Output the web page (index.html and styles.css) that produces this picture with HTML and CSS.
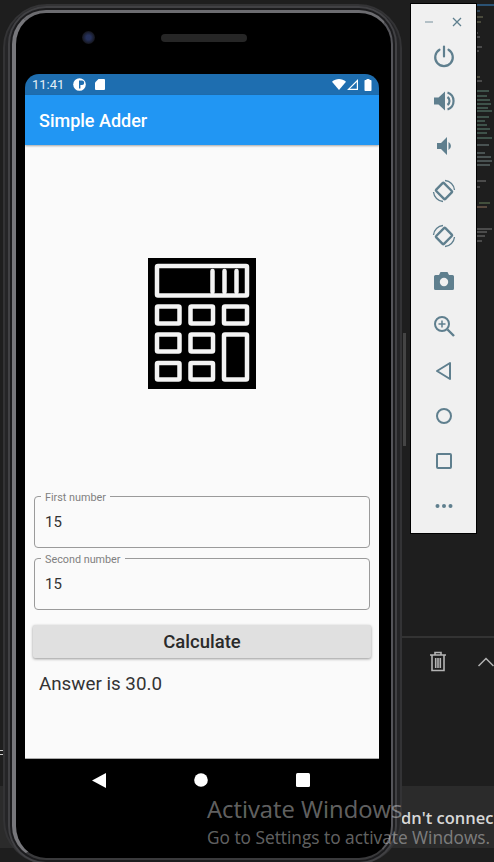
FILE: index.html
```html
<!DOCTYPE html>
<html lang="en">
<head>
<meta charset="UTF-8">
<meta name="viewport" content="width=device-width, initial-scale=1.0">
<title>Simple Adder</title>
<link rel="stylesheet" href="styles.css">
</head>
<body>
<div class="desktop">
  <div class="ide-band"></div>
  <div class="run-panel">
    <svg class="trash" width="18" height="21" viewBox="0 0 18 21" fill="none" stroke="#b4b4b4" stroke-width="1.6">
      <path d="M1 4h16M6 4V1.500h6V4M3 4v15.500h12V4M6.700 7v10M9 7v10M11.300 7v10"/>
    </svg>
    <svg class="chevron" width="16" height="10" viewBox="0 0 16 10" fill="none" stroke="#b4b4b4" stroke-width="1.5">
      <path d="M0.500 9L8 1.500 15.500 9"/>
    </svg>
  </div>
  <div class="error-text">dn't connec</div>
  <div class="side-scroll"></div>
  <div class="left-mark"></div>

  <svg class="minimap" width="17" height="245" viewBox="0 0 17 245" fill="none" stroke-width="1" opacity="0.8">
    <path stroke="#2f5f8a" stroke-width="2" d="M0 3h17"/>
    <path stroke="#4a7fa8" d="M0 9h3"/>
    <path stroke="#8d8d6a" d="M0 15h6M0 20h4"/>
    <path stroke="#909090" d="M0 31h1M0 35h3M0 45h5M0 49h2"/>
    <path stroke="#8d8d6a" d="M0 75h3"/>
    <path stroke="#909090" d="M0 79h5"/>
    <path stroke="#6fa08c" d="M0 89h12M0 94h10M0 98h13M0 102h14M0 106h11M0 109h15"/>
    <path stroke="#6fa08c" d="M0 115h12M0 119h8M0 123h10M0 127h13M0 131h10M0 136h15"/>
    <path stroke="#8aa0a0" d="M0 143h12M0 151h8M0 155h14M0 159h15M0 163h13"/>
    <path stroke="#909090" d="M0 179h9M0 185h3"/>
    <path stroke="#7d9a6a" d="M2 201h11"/>
    <path stroke="#b08a70" d="M0 205h10"/>
    <path stroke="#909090" d="M0 227h15M0 230h10M0 234h8M0 239h5"/>
  </svg>

  <div class="phone">
    <div class="phone-frame">
      <div class="phone-top">
        <div class="camera"></div>
        <div class="speaker"></div>
      </div>
      <div class="screen">
        <div class="status-bar">
          <span class="clock">11:41</span>
          <svg class="status-icon" width="13" height="13" viewBox="0 0 13 13">
            <circle cx="6.500" cy="6.500" r="6.300" fill="#fff"/>
            <path d="M6 2.500h3a2.200 2.200 0 0 1 0 4.400H7.400v3.600H6z" fill="#1e6eb0"/>
          </svg>
          <svg class="status-icon" width="10" height="11" viewBox="0 0 10 11">
            <path d="M3.500 0H9a1 1 0 0 1 1 1v9a1 1 0 0 1-1 1H1a1 1 0 0 1-1-1V3.500z" fill="#fff"/>
          </svg>
          <span class="status-gap"></span>
          <svg width="14" height="11" viewBox="0 0 14 11"><path d="M0 2.800C4-.9 10-.9 14 2.800L7 11z" fill="#fff"/></svg>
          <svg class="signal" width="11" height="11" viewBox="0 0 11 11"><path d="M11 0v11H0zM9.800 2.900L2.900 9.800h6.900z" fill="#fff" fill-rule="evenodd"/></svg>
          <svg width="8" height="12" viewBox="0 0 7 12"><path d="M2 0h3v1h1.200a.8.8 0 0 1 .8.8v9.400a.8.8 0 0 1-.8.8H.8a.8.8 0 0 1-.8-.8V1.800a.8.8 0 0 1 .8-.8H2z" fill="#fff"/></svg>
        </div>
        <div class="app-bar">Simple Adder</div>
        <div class="content">
          <svg class="calc" width="108" height="131" viewBox="0 0 108 131" fill="none" stroke="#f4f4f4" stroke-width="4.500" stroke-linejoin="round">
            <rect width="108" height="131" fill="#000" stroke="none"/>
            <rect x="9" y="8" width="90" height="29.500" rx="1"/>
            <path d="M64.500 13v21M76.500 13v21M88.500 13v21" stroke-linecap="round"/>
            <rect x="9" y="48.500" width="22.500" height="17" rx="1"/>
            <rect x="42.500" y="48.500" width="22.500" height="17" rx="1"/>
            <rect x="76" y="48.500" width="23" height="17" rx="1"/>
            <rect x="9" y="76.500" width="22.500" height="17" rx="1"/>
            <rect x="42.500" y="76.500" width="22.500" height="17" rx="1"/>
            <rect x="76" y="76.500" width="23" height="45" rx="1"/>
            <rect x="9" y="105" width="22.500" height="16.500" rx="1"/>
            <rect x="42.500" y="105" width="22.500" height="16.500" rx="1"/>
          </svg>
          <div class="field">
            <span class="field-label">First number</span>
            <span class="field-value">15</span>
          </div>
          <div class="field">
            <span class="field-label">Second number</span>
            <span class="field-value">15</span>
          </div>
          <div class="calc-btn">Calculate</div>
          <div class="answer">Answer is 30.0</div>
        </div>
        <div class="nav-bar">
          <svg width="14" height="15" viewBox="0 0 14 15"><path d="M14 0v15L0 7.500z" fill="#fff"/></svg>
          <svg width="14" height="14" viewBox="0 0 14 14"><circle cx="7" cy="7" r="6.800" fill="#fff"/></svg>
          <svg width="14" height="14" viewBox="0 0 14 14"><rect width="14" height="14" rx="1.500" fill="#fff"/></svg>
        </div>
      </div>
    </div>
  </div>

  <div class="toolbar">
    <div class="toolbar-head">
      <svg width="12" height="12" viewBox="0 0 12 12"><path d="M2 6h8" stroke="#9fb0b9" stroke-width="1.500"/></svg>
      <svg width="12" height="12" viewBox="0 0 12 12"><path d="M2 2l8 8M10 2l-8 8" stroke="#5f7f8e" stroke-width="1.300"/></svg>
    </div>
    <svg class="tool" viewBox="0 0 24 24" fill="none" stroke="#5f7f8e" stroke-width="2.200" stroke-linecap="round">
      <path d="M12 2.500v10M7.500 5.700a8.800 8.800 0 1 0 9 0"/>
    </svg>
    <svg class="tool" viewBox="0 0 24 24">
      <path d="M2 8.500v7h4.500l6.500 6V2.500l-6.500 6z" fill="#5f7f8e"/>
      <path d="M15.500 8a5 5 0 0 1 0 8M15.500 3.500a9 9 0 0 1 0 17" fill="none" stroke="#5f7f8e" stroke-width="2.200"/>
    </svg>
    <svg class="tool" viewBox="0 0 24 24">
      <path d="M5 9v6h4l6 6V3L9 9z" fill="#5f7f8e"/>
      <path d="M16.500 8a4.500 4.500 0 0 1 0 8z" fill="#5f7f8e"/>
    </svg>
    <svg class="tool" viewBox="0 0 24 24" fill="none" stroke="#5f7f8e">
      <rect x="5.500" y="6.500" width="13" height="11" rx="1" stroke-width="2.400" transform="rotate(45 12 12)"/>
      <path d="M13 1.500a10.500 10.500 0 0 1 9.500 9.500M11 22.500A10.500 10.500 0 0 1 1.500 13" stroke-width="1.300"/>
    </svg>
    <svg class="tool" viewBox="0 0 24 24" fill="none" stroke="#5f7f8e">
      <rect x="5.500" y="6.500" width="13" height="11" rx="1" stroke-width="2.400" transform="rotate(-45 12 12)"/>
      <path d="M11 1.500A10.500 10.500 0 0 0 1.500 11M13 22.500A10.500 10.500 0 0 0 22.500 13" stroke-width="1.300"/>
    </svg>
    <svg class="tool" viewBox="0 0 24 24">
      <path d="M8.500 3h7L17 6h3.500A1.500 1.500 0 0 1 22 7.500v12a1.500 1.500 0 0 1-1.500 1.500h-17A1.500 1.500 0 0 1 2 19.500v-12A1.500 1.500 0 0 1 3.500 6H7z" fill="#5f7f8e"/>
      <circle cx="12" cy="13" r="4.200" fill="#f0f0f0"/>
    </svg>
    <svg class="tool" viewBox="0 0 24 24" fill="none" stroke="#5f7f8e" stroke-width="2">
      <circle cx="10" cy="10" r="7"/>
      <path d="M15.500 15.500L22 22" stroke-width="2.400"/>
      <path d="M10 6.500v7M6.500 10h7" stroke-width="1.500"/>
    </svg>
    <svg class="tool" viewBox="0 0 24 24" fill="none" stroke="#5f7f8e" stroke-width="2" stroke-linejoin="round">
      <path d="M18 4v16L5 12z"/>
    </svg>
    <svg class="tool" viewBox="0 0 24 24" fill="none" stroke="#5f7f8e" stroke-width="2">
      <circle cx="12" cy="12" r="7"/>
    </svg>
    <svg class="tool" viewBox="0 0 24 24" fill="none" stroke="#5f7f8e" stroke-width="2">
      <rect x="5" y="5" width="14" height="14" rx="1"/>
    </svg>
    <svg class="tool" viewBox="0 0 24 24" fill="#5f7f8e">
      <circle cx="5.500" cy="12" r="2"/><circle cx="12" cy="12" r="2"/><circle cx="18.500" cy="12" r="2"/>
    </svg>
  </div>

  <div class="watermark">
    <div class="watermark-title">Activate Windows</div>
    <div class="watermark-sub">Go to Settings to activate Windows.</div>
  </div>
</div>
</body>
</html>
```

FILE: styles.css
```css
* {
  box-sizing: border-box;
}

html, body {
  margin: 0;
  height: 100%;
  background-color: #1e1e1e;
}

.desktop {
  position: relative;
  width: 494px;
  height: 862px;
  overflow: hidden;
  background-color: #1e1e1e;
  font-family: Roboto, "Liberation Sans", sans-serif;
}

.ide-band {
  position: absolute;
  left: 0;
  top: 786px;
  width: 494px;
  height: 62px;
  background-color: #2b2b2b;
}

.run-panel {
  position: absolute;
  left: 402px;
  top: 636px;
  width: 92px;
  height: 150px;
  border-top: 2px solid #333;
  padding: 13px 0 0 27px;
  display: flex;
  align-items: flex-start;
  gap: 31px;
}

.chevron {
  margin-top: 6px;
}

.error-text {
  position: absolute;
  left: 401px;
  top: 809px;
  font-family: "Open Sans", sans-serif;
  font-size: 16.500px;
  line-height: 18px;
  font-weight: 600;
  color: #d8d8d8;
  white-space: nowrap;
}

.side-scroll {
  position: absolute;
  left: 403px;
  top: 333px;
  width: 3px;
  height: 113px;
  background-color: #444;
}

.left-mark {
  position: absolute;
  left: 0;
  top: 750px;
  width: 3px;
  height: 5px;
  border-top: 1px solid #ccc;
  border-bottom: 1px solid #ccc;
}

.minimap {
  position: absolute;
  left: 477px;
  top: 2px;
}

/* phone */
.phone {
  position: absolute;
  left: 3px;
  top: 4px;
  width: 399px;
  height: 860px;
  padding: 4px 7px 2px;
  background-color: #252527;
  border: 2px solid #333335;
  border-radius: 44px;
}

.phone-frame {
  height: 100%;
  padding-left: 9px;
  background-color: #000;
  border-style: solid;
  border-width: 3px 2px 2px 4px;
  border-color: #6c6c70 #55555a #3a3a3c #77777b;
  border-radius: 34px;
  box-shadow: 0 0 0 2px #1c1c1e, 0 0 0 4px #414144;
}

.phone-top {
  height: 61px;
  padding: 18px 0 0 57px;
  display: flex;
  align-items: flex-start;
  gap: 66px;
}

.camera {
  width: 13px;
  height: 13px;
  border-radius: 50%;
  background: radial-gradient(circle, #25305a 25%, #15161c 70%);
}

.speaker {
  width: 86px;
  height: 8px;
  margin-top: 3px;
  border-radius: 4px;
  background-color: #262626;
}

.screen {
  width: 354px;
  height: 770px;
  border-radius: 14px 14px 0 0;
  overflow: hidden;
  display: flex;
  flex-direction: column;
}

.status-bar {
  height: 21px;
  flex-shrink: 0;
  background-color: #1e6eb0;
  padding: 0 7px 0 7px;
  display: flex;
  align-items: center;
  color: #fff;
  font-size: 13px;
}

.clock {
  width: 41px;
  color: #e4eef6;
}

.status-icon {
  margin-right: 9px;
}

.status-gap {
  flex: 1;
}

.signal {
  margin: 0 6px 0 1px;
}

.app-bar {
  height: 50px;
  flex-shrink: 0;
  background-color: #2196f3;
  color: #fff;
  font-size: 18px;
  font-weight: 500;
  padding: 0 14px;
  display: flex;
  align-items: center;
  box-shadow: 0 1px 2px rgba(0, 0, 0, 0.35);
  position: relative;
}

.content {
  height: 614px;
  flex-shrink: 0;
  background-color: #fafafa;
  padding: 113px 8px 0;
  display: flex;
  flex-direction: column;
  border-bottom: 1px solid #aaa;
}

.calc {
  align-self: center;
  flex-shrink: 0;
  margin-bottom: 107px;
}

.field {
  position: relative;
  height: 52px;
  margin: 0 1px 10px;
  border: 1px solid #9a9a9a;
  border-radius: 4px;
  padding: 15px 10px 0;
}

.field-label {
  position: absolute;
  left: 6px;
  top: -6px;
  padding: 0 4px;
  background-color: #fafafa;
  font-size: 10.800px;
  line-height: 13px;
  color: #808080;
}

.field-value {
  font-size: 15px;
  color: #333;
}

.calc-btn {
  height: 33px;
  margin-top: 5px;
  flex-shrink: 0;
  background-color: #e0e0e0;
  border-radius: 2px;
  box-shadow: 0 1px 3px rgba(0, 0, 0, 0.4);
  color: #2a2a2a;
  font-size: 18.500px;
  font-weight: 500;
  display: flex;
  align-items: center;
  justify-content: center;
}

.answer {
  margin: 15px 0 0 6px;
  font-size: 18.800px;
  color: #333;
}

.nav-bar {
  flex: 1;
  background-color: #000;
  display: flex;
  justify-content: space-between;
  padding: 14px 69px 0 67px;
  align-items: flex-start;
}

/* emulator side toolbar */
.toolbar {
  position: absolute;
  left: 410px;
  top: 3px;
  width: 67px;
  height: 531px;
  background-color: #f0f0f0;
  border: 1px solid #000;
  display: flex;
  flex-direction: column;
  align-items: center;
}

.toolbar-head {
  width: 100%;
  height: 31px;
  padding: 12px 13px 0 12px;
  display: flex;
  justify-content: space-between;
}

.tool {
  width: 24px;
  height: 24px;
  flex-shrink: 0;
  margin-top: 9px;
  margin-bottom: 12px;
}

.watermark {
  position: absolute;
  left: 207px;
  top: 794px;
  font-family: "Open Sans", sans-serif;
  color: rgba(255, 255, 255, 0.4);
  white-space: nowrap;
}

.watermark-title {
  font-size: 23.800px;
  line-height: 30px;
}

.watermark-sub {
  margin-top: 4px;
  font-size: 17.300px;
  line-height: 20px;
}
```
